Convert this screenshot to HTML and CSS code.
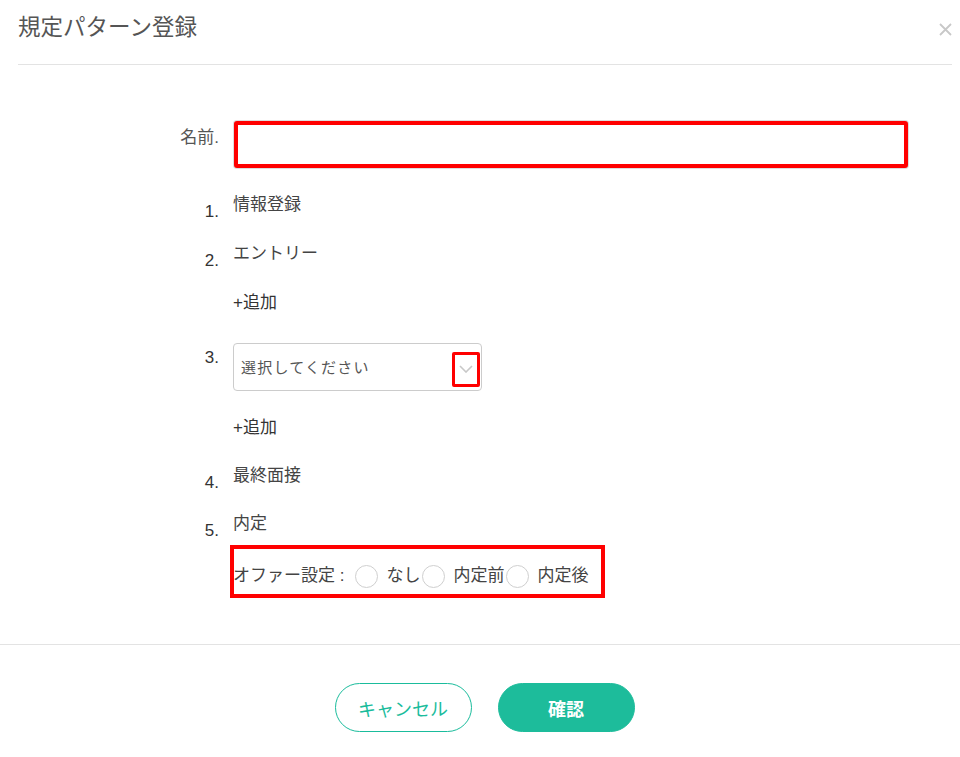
FILE: index.html
```html
<!DOCTYPE html>
<html lang="ja">
<head>
	<meta charset="UTF-8">
	<title>規定パターン登録</title>
	<link rel="stylesheet" href="styles.css">
</head>
<body>
	<div class="modal">
		<div class="modal-head">
			<h1 class="modal-title">規定パターン登録</h1>
			<span class="modal-close">
				<svg width="13" height="13" viewBox="0 0 13 13"><path d="M1 1L12 12M12 1L1 12" stroke="#c8c8c8" stroke-width="1.8" fill="none"/></svg>
			</span>
		</div>

		<div class="modal-body">
			<div class="row name-row">
				<label class="row-label">名前.</label>
				<input class="name-input" type="text">
			</div>

			<div class="steps">
				<div class="row">
					<span class="num">1.</span>
					<span class="step-text">情報登録</span>
				</div>
				<div class="row">
					<span class="num">2.</span>
					<span class="step-text">エントリー</span>
				</div>
				<div class="row">
					<span></span>
					<a class="add-link">+追加</a>
				</div>
				<div class="row row-select">
					<span class="num num-select">3.</span>
					<div class="select">
						<span class="select-text">選択してください</span>
						<span class="select-arrow">
							<svg width="14" height="8" viewBox="0 0 14 8"><path d="M1 1L7 7L13 1" stroke="#c8c8c8" stroke-width="1.6" fill="none"/></svg>
						</span>
					</div>
				</div>
				<div class="row">
					<span></span>
					<a class="add-link">+追加</a>
				</div>
				<div class="row row-up">
					<span class="num">4.</span>
					<span class="step-text">最終面接</span>
				</div>
				<div class="row row-up">
					<span class="num">5.</span>
					<span class="step-text">内定</span>
				</div>
				<div class="row row-offer">
					<span></span>
					<div class="offer">
						<span class="offer-label">オファー設定 :</span>
						<label class="radio"><i class="radio-dot"></i>なし</label>
						<label class="radio"><i class="radio-dot"></i>内定前</label>
						<label class="radio"><i class="radio-dot"></i>内定後</label>
					</div>
				</div>
			</div>
		</div>

		<div class="modal-foot">
			<button class="btn btn-cancel">キャンセル</button>
			<button class="btn btn-ok">確認</button>
		</div>
	</div>
</body>
</html>
```

FILE: styles.css
```css
*{
	margin: 0;
	padding: 0;
	box-sizing: border-box;
}
html,body{
	width: 100%;
	height: 100%;
	background: #fff;
	font-family: "Liberation Sans", "Noto Sans CJK JP", sans-serif;
	color: #444;
}
.modal{
	width: 960px;
}
.modal-head{
	display: flex;
	justify-content: space-between;
	align-items: flex-start;
	margin: 0 8px 0 18px;
	padding: 13px 0 21px;
	border-bottom: 1px solid #e3e3e3;
}
.modal-title{
	font-size: 22.5px;
	font-weight: 400;
	line-height: 30px;
	color: #555;
}
.modal-close{
	display: flex;
	padding-top: 10px;
}
.modal-body{
	padding: 56px 0 50px;
}
.row{
	display: grid;
	grid-template-columns: 219px 1fr;
	column-gap: 14px;
	align-items: start;
	font-size: 17px;
	line-height: 24px;
}
.row-label{
	text-align: right;
	padding-top: 5px;
	color: #555;
}
.name-input{
	display: block;
	margin-left: 1px;
	width: 674px;
	height: 47px;
	border: 4px solid #ff0000;
	border-radius: 3px;
	box-shadow: 0 0 0 1px #ddd;
	outline: none;
}
.steps{
	display: flex;
	flex-direction: column;
	gap: 25px;
	margin-top: 25px;
}
.num{
	text-align: right;
	margin-top: 7px;
	margin-bottom: -7px;
	color: #333;
}
.num-select{
	margin-top: 3px;
	margin-bottom: -3px;
}
.step-text{
	color: #444;
}
.add-link{
	color: #333;
	cursor: pointer;
}
.row-select{
	margin-top: 3px;
}
.row-up{
	margin-top: -1px;
}
.select{
	display: flex;
	justify-content: space-between;
	align-items: center;
	width: 249px;
	height: 48px;
	border: 1px solid #ccc;
	border-radius: 4px;
	padding: 0 1px 0 7px;
}
.select-text{
	font-size: 15px;
	letter-spacing: 1.2px;
	color: #555;
	padding-top: 1px;
}
.select-arrow{
	display: flex;
	align-items: center;
	justify-content: center;
	width: 28px;
	height: 35px;
	margin-top: 4px;
	border: 3px solid #ff0000;
	border-radius: 2px;
}
.row-offer{
	margin-top: -12px;
}
.offer{
	display: flex;
	align-items: center;
	width: 367px;
	height: 45px;
	margin-left: 1px;
	padding: 15px 0 6px;
	outline: 4px solid #ff0000;
	font-size: 17px;
	color: #444;
}
.offer-label{
	margin-left: -1px;
	margin-right: 11px;
}
.radio{
	display: flex;
	align-items: center;
	margin-right: 2px;
}
.radio-dot{
	display: block;
	width: 23px;
	height: 23px;
	border: 1px solid #cfcfcf;
	border-radius: 50%;
	margin-right: 8px;
}
.modal-foot{
	display: flex;
	justify-content: center;
	gap: 26px;
	padding: 38px 0 0 9px;
	border-top: 1px solid #e3e3e3;
}
.btn{
	width: 137px;
	height: 49px;
	border-radius: 25px;
	font-family: "Liberation Sans", "Noto Sans CJK JP", sans-serif;
	font-size: 18px;
	cursor: pointer;
}
.btn-cancel{
	background: #fff;
	border: 1px solid #1abc9c;
	color: #1abc9c;
	font-weight: 400;
}
.btn-ok{
	background: #1dbc9b;
	border: 1px solid #1dbc9b;
	color: #fff;
	font-weight: 700;
}
```
